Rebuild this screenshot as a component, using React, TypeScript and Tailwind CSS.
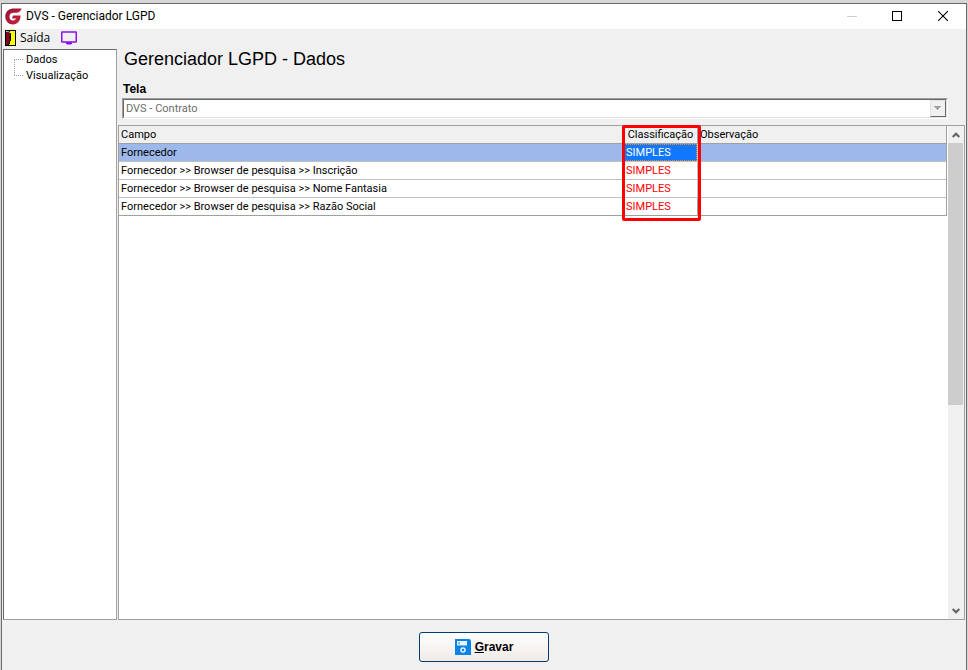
import React from "react";

const rows = [
  { campo: "Fornecedor", classificacao: "SIMPLES", observacao: "" },
  {
    campo: "Fornecedor >> Browser de pesquisa >> Inscrição",
    classificacao: "SIMPLES",
    observacao: "",
  },
  {
    campo: "Fornecedor >> Browser de pesquisa >> Nome Fantasia",
    classificacao: "SIMPLES",
    observacao: "",
  },
  {
    campo: "Fornecedor >> Browser de pesquisa >> Razão Social",
    classificacao: "SIMPLES",
    observacao: "",
  },
];

const treeItems = ["Dados", "Visualização"];

const Logo = () => (
  <svg width="17" height="17" viewBox="0 0 17 17">
    <defs>
      <linearGradient id="logo" x1="0" y1="0" x2="1" y2="1">
        <stop offset="0" stopColor="#8e1734" />
        <stop offset="1" stopColor="#cf2340" />
      </linearGradient>
    </defs>
    <path
      fill="url(#logo)"
      d="M16.5 0.3C14 1 11 0.300 8 0.500C3.500 0.800 0.300 4 0.300 8.500S3.500 16.500 8 16.500C12.500 16.500 15.500 13 15.600 7.500H8L7 10.500H11C10.600 11.800 9.600 12.500 8 12.500C5.800 12.500 4.500 11 4.500 8.700C4.500 6.200 6 4.800 8.500 4.800C12 4.800 15.500 5 16.500 0.300Z"
    />
  </svg>
);

const DoorIcon = () => (
  <svg width="11" height="16" viewBox="0 0 11 16" shapeRendering="crispEdges">
    <rect width="11" height="16" fill="#000" />
    <rect x="1" y="1" width="9" height="14" fill="#ff0" />
    <path fill="#7b0a12" d="M1 2h1v-1h3v12h-1v1h-1v1H1z" />
    <path fill="#000" d="M5 3h1v8H5zM4 11h1v3H4zM3 14h1v1H3z" />
    <path fill="#26c6da" d="M2 1h2v1H2zM4 2h1v1H4z" />
    <path fill="#000" d="M4 7h1v1H4z" />
  </svg>
);

const MonitorIcon = () => (
  <svg width="16" height="14" viewBox="0 0 16 14">
    <rect x="0.750" y="1" width="14.500" height="10" rx="0.500" fill="none" stroke="#8a10e8" strokeWidth="1.500" />
    <path d="M5 11h6v1.500l-1 1H6l-1-1z" fill="#8a10e8" />
  </svg>
);

const SaveIcon = () => (
  <svg width="16" height="16" viewBox="0 0 16 16">
    <path fill="#0a84e8" d="M0 0h14.500L16 1.500V16H0z" />
    <rect x="2" y="2" width="10" height="4.500" fill="#e8f3fd" />
    <rect x="3" y="3" width="2" height="2.500" fill="#7dbcf3" />
    <circle cx="8" cy="11" r="2" fill="none" stroke="#e8f3fd" strokeWidth="1.500" />
  </svg>
);

const TitleBar = () => (
  <header className="flex h-[25px] items-center justify-between bg-white pl-[3px]">
    <div className="flex items-center gap-1 pb-px text-[12px] leading-4 text-black">
      <Logo />
      <span>DVS - Gerenciador LGPD</span>
    </div>
    <div className="flex h-full pb-px">
      <button aria-label="Minimizar" disabled className="flex w-[45px] items-center justify-center">
        <svg width="10" height="10" shapeRendering="crispEdges">
          <path d="M0 5h10v1H0z" fill="#ccc" />
        </svg>
      </button>
      <button aria-label="Maximizar" className="flex w-[45px] items-center justify-center">
        <svg width="10" height="10" viewBox="0 0 10 10" shapeRendering="crispEdges">
          <path d="M0.5 0.5h9v9h-9z" fill="none" stroke="#000" />
        </svg>
      </button>
      <button aria-label="Fechar" className="flex w-[47px] items-center justify-center">
        <svg width="10" height="10" viewBox="0 0 10 10">
          <path d="M0 0L10 10M10 0L0 10" stroke="#000" strokeWidth="1.100" />
        </svg>
      </button>
    </div>
  </header>
);

const Toolbar = () => (
  <div className="flex h-5 items-center gap-[11px] pb-0.5 pl-[3px]">
    <button className="flex items-center gap-1 text-[12px] leading-4 font-['Open_Sans','Noto_Sans',sans-serif]">
      <DoorIcon />
      Saída
    </button>
    <button aria-label="Monitor">
      <MonitorIcon />
    </button>
  </div>
);

const Tree = () => (
  <nav className="w-[114px] shrink-0 border border-t-[#696969] border-l-[#696969] border-r-[#a0a0a0] border-b-[#a0a0a0] bg-white pt-0.5 pl-[10px]">
    <ul>
      {treeItems.map((item, i) => (
        <li key={item} className="flex h-4 items-center">
          <svg width="12" height="16" shapeRendering="crispEdges">
            <path
              d={i === 0 ? "M0.5 8V16M0 7.500H9" : "M0.5 0V8M0 7.500H9"}
              fill="none"
              stroke="#a0a0a0"
              strokeDasharray="1 1"
            />
          </svg>
          <a href="#" className="leading-4">
            {item}
          </a>
        </li>
      ))}
    </ul>
  </nav>
);

const ScreenSelect = () => (
  <div className="relative mr-[17px] ml-1 border border-t-[#a0a0a0] border-l-[#a0a0a0] border-r-white border-b-white">
    <select
      id="tela"
      disabled
      className="block h-[19px] w-full appearance-none border border-t-[#696969] border-l-[#696969] border-r-[#e3e3e3] border-b-[#e3e3e3] bg-white pt-px pl-0.5 text-[11px] leading-4 text-[#6d6d6d] opacity-100"
    >
      <option>DVS - Contrato</option>
    </select>
    <span className="pointer-events-none absolute top-px right-px bottom-px flex w-4 items-center justify-center border border-t-[#e3e3e3] border-l-[#e3e3e3] border-r-[#696969] border-b-[#696969] bg-[#f0f0f0]">
      <svg width="8" height="5" shapeRendering="crispEdges">
        <path d="M0 0h7v1H0zM1 1h5v1H1zM2 2h3v1H2zM3 3h1v1H3z" fill="#a0a0a0" />
        <path d="M7 1h1v1H7zM6 2h1v1H6zM5 3h1v1H5zM4 4h1v1H4z" fill="#fff" />
      </svg>
    </span>
  </div>
);

const ScrollBar = () => (
  <div className="flex w-4 shrink-0 flex-col bg-[#f0f0f0]">
    <button aria-label="Rolar para cima" className="flex h-[17px] items-center justify-center">
      <svg width="8" height="6" viewBox="0 0 8 6">
        <path d="M0.700 5L4 1.700L7.300 5" fill="none" stroke="#606060" strokeWidth="2" />
      </svg>
    </button>
    <div className="flex-1">
      <div className="mr-px h-[57%] bg-[#cdcdcd]" />
    </div>
    <button aria-label="Rolar para baixo" className="flex h-[17px] items-center justify-center">
      <svg width="8" height="6" viewBox="0 0 8 6">
        <path d="M0.700 1L4 4.300L7.300 1" fill="none" stroke="#606060" strokeWidth="2" />
      </svg>
    </button>
  </div>
);

const Grid = () => (
  <div className="relative flex flex-1 border border-[#a0a0a0] bg-white">
    <div className="flex-1 pr-px">
      <table className="w-full table-fixed border-separate border-spacing-0 border-r border-[#a0a0a0]">
        <colgroup>
          <col />
          <col className="w-[74px]" />
          <col className="w-[248px]" />
        </colgroup>
        <thead>
          <tr className="h-[18px] bg-[#f0f0f0] text-left">
            <th className="border-b border-[#a0a0a0] p-0 pt-px pl-0.5 font-normal">Campo</th>
            <th className="border-r border-b border-[#a0a0a0] p-0 pt-px text-center font-normal">Classificação</th>
            <th className="border-b border-[#a0a0a0] p-0 pt-px pl-0.5 font-normal">Observação</th>
          </tr>
        </thead>
        <tbody>
          {rows.map((row, i) => (
            <tr
              key={row.campo}
              className={
                i === 0
                  ? "h-[18px] bg-[#9db8eb] *:border-[#c0c0c0]"
                  : "h-[18px] *:border-[#c0c0c0] last:*:border-[#a0a0a0]"
              }
            >
              <td className="border-b p-0 pt-px pl-0.5">{row.campo}</td>
              <td className={i === 0 ? "border-r border-b p-0" : "border-r border-b p-0 pt-px pl-0.5 text-[#f00]"}>
                {i === 0 ? (
                  <div className="h-[17px] border border-dotted border-[#ff8728] bg-[#0f78ff] pl-px leading-4 text-white">
                    {row.classificacao}
                  </div>
                ) : (
                  row.classificacao
                )}
              </td>
              <td className="border-b p-0 pt-px pl-0.5">{row.observacao}</td>
            </tr>
          ))}
        </tbody>
      </table>
    </div>
    <ScrollBar />
    {/* highlight over the classification column */}
    <div className="pointer-events-none absolute -top-px right-[263px] h-24 w-[79px] rounded-xs border-3 border-[#f00]" />
  </div>
);

const App = () => {
  return (
    <div className="flex min-h-screen flex-col bg-[#d6d6d6] px-px pt-[3px] text-[11px] leading-4 text-black font-['Roboto','Liberation_Sans',sans-serif]">
      <div className="flex flex-1 flex-col border-x border-t border-[#696969] bg-[#f0f0f0]">
        <TitleBar />
        <Toolbar />
        <main className="flex flex-1 gap-px pr-px pl-px">
          <Tree />
          <section className="flex flex-1 flex-col">
            <h1 className="pl-1.5 text-[18px] leading-5 font-['Liberation_Sans',Arial,sans-serif]">
              Gerenciador LGPD - Dados
            </h1>
            <label
              htmlFor="tela"
              className="mt-3 mb-px pl-[5px] text-[12px] leading-4 font-bold font-['Liberation_Sans',Arial,sans-serif]"
            >
              Tela
            </label>
            <ScreenSelect />
            <div className="mt-1.5 flex flex-1">
              <Grid />
            </div>
          </section>
        </main>
        <footer className="flex justify-center pt-3 pb-2">
          <button className="flex h-[30px] w-[130px] items-center justify-center gap-1 rounded-[3px] border border-[#003c74] bg-linear-to-b from-white to-[#efeae6] text-[12px] font-bold font-['Liberation_Sans',Arial,sans-serif]">
            <SaveIcon />
            <span>
              <span className="underline">G</span>ravar
            </span>
          </button>
        </footer>
      </div>
    </div>
  );
};

export default App;
